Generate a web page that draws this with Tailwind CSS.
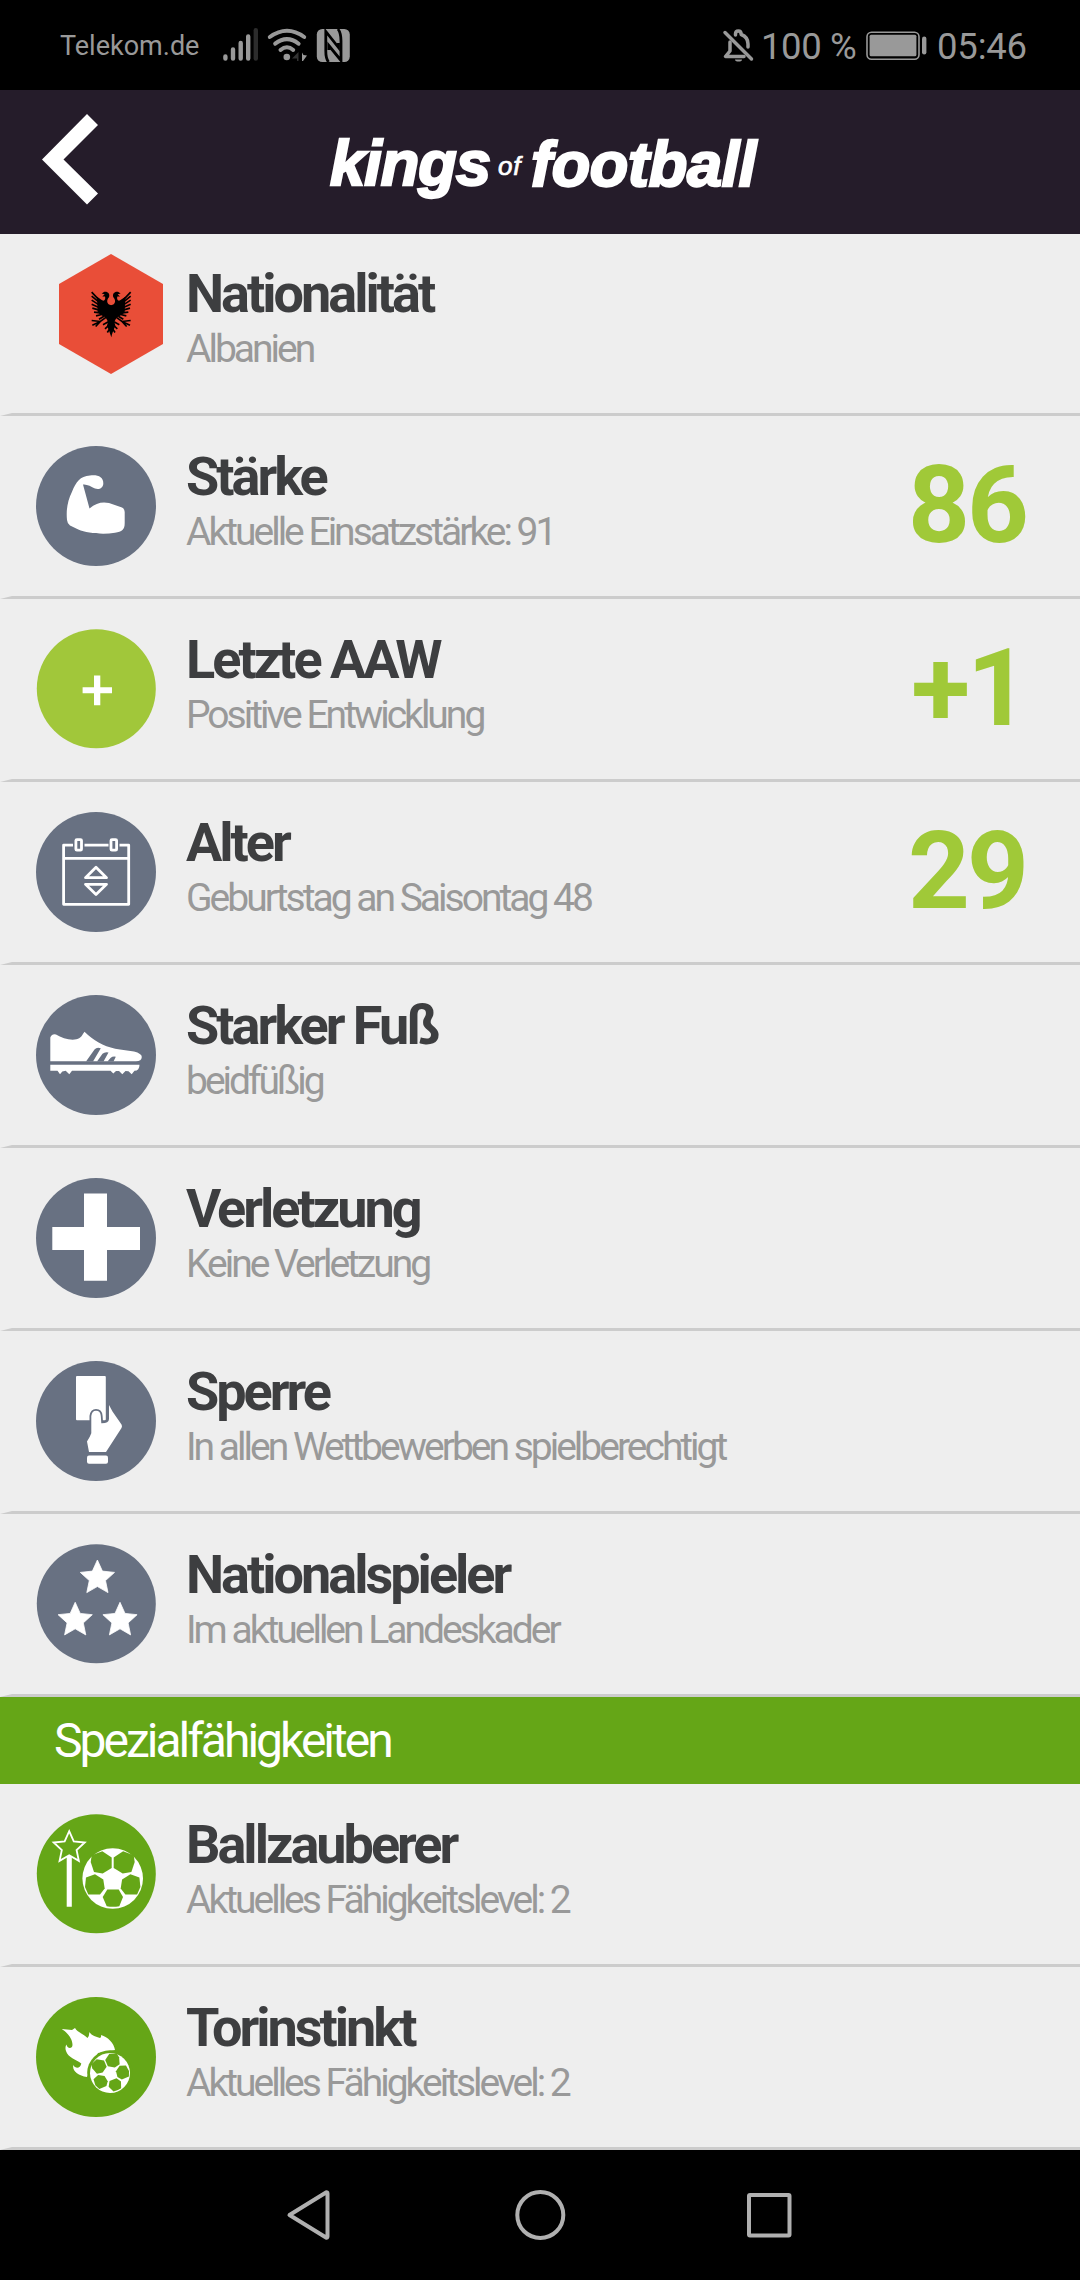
<!DOCTYPE html>
<html lang="de">
<head>
<meta charset="utf-8">
<title>Kings of Football</title>
<script src="https://cdn.jsdelivr.net/npm/@tailwindcss/browser@4"></script>
</head>
<body class="w-[1080px] h-[2280px] overflow-hidden bg-black font-[Roboto,sans-serif]">

<svg class="hidden">
  <defs>
    <path id="star" d="M0-18 5-6.9 17.1-5.6 8.1 2.6 10.6 14.6 0 8.5-10.6 14.6-8.1 2.6-17.1-5.6-5-6.9Z"/>
    <g id="ball">
      <circle r="30.3" fill="#fff"/>
      <g fill="#65a617">
        <path d="M-21-23.3-10.4-27.2-1-21V-10.6L-10-5-18.7-6.6-22-16.6Z"/>
        <path d="M-26.7-1-17.7-4.3-9.4 1-8 10-12.7 16H-24.4L-27.7 8.4Z"/>
        <g transform="scale(-1 1)">
          <path d="M-21-23.3-10.4-27.2-1-21V-10.6L-10-5-18.7-6.6-22-16.6Z"/>
          <path d="M-26.7-1-17.7-4.3-9.4 1-8 10-12.7 16H-24.4L-27.7 8.4Z"/>
        </g>
        <path d="M-5.4 11H6L10.3 18.4 6.6 27.7Q0 29-6 27.7L-10 18.4Z"/>
      </g>
    </g>
    <g id="wing">
      <path d="M79 62 72 60C64 54 66 44 72 38 76 28 68 20 58 22L50 27 59 29 52 36 60 36C62 42 60 48 55 49 48 46 44 42 36 37L38 84 52 94 62 99 69 112 66 124 72 138 79 158Z"/>
      <path d="M42 46 20 23M42 53 20 35M42 61 20 47M42 69 20 59M43 77 22 71M46 85 27 83M50 90 33 94M57 95 42 104M64 98 46 111 20 108M46 111 22 122M46 111 32 126M70 112 54 121M72 122 60 133M74 133 67 144" fill="none" stroke="#000" stroke-width="5"/>
    </g>
  </defs>
</svg>

<!-- status bar -->
<div class="flex h-[90px] bg-black text-[#999]">
  <span class="ml-[60px] w-[160px] text-[27px] leading-[92px] whitespace-nowrap">Telekom.de</span>
  <svg class="mt-[20px] h-[50px] w-[140px]" viewBox="220 20 140 50" fill="#999">
    <g stroke="#999" stroke-width="4.4" stroke-linecap="round" fill="none">
      <path d="M225.4 56.5V58.6M233 49.5V58.6M240.7 43V58.6M248.2 36.4V58.6"/>
      <path d="M255.8 30.2V58.6" stroke="#2c2c2c"/>
      <path stroke-width="4" d="M269.8 37Q287 24.5 304.2 37M275.2 43.7Q287 34.5 298.6 43.7M280.5 50Q287 44.5 293.2 50"/>
    </g>
    <circle cx="286.8" cy="57" r="3.3"/>
    <path d="M292 58.500 298.500 52V61H297V58.500Z" fill="#333"/>
    <path d="M302 52.500 303.500 55 307 55.500 303 61H302Z"/>
    <rect x="316.800" y="29" width="33" height="33" rx="5.500"/>
    <g fill="none" stroke="#000" stroke-width="2.800">
      <path d="M328.500 62C325.500 58 325.800 54 325.800 50V31.500L338.500 47.500V43"/>
      <path d="M338 29C341 33 341 37 341 41V60.500L328.800 45.500V50"/>
    </g>
  </svg>
  <svg class="mt-[20px] ml-[360px] h-[50px] w-[40px]" viewBox="720 20 40 50" fill="none" stroke="#999" stroke-width="3.500" stroke-linecap="round" stroke-linejoin="round">
    <path d="M725 32.500 751.500 59"/>
    <path d="M730 42V51L725.500 56.500H744M735.500 35V34Q735.500 31 738.300 31 741.200 31 741.200 34.500 748 37 748 44V47"/>
    <path d="M735 59.500H742Q742 61.500 738.500 61.500 735 61.500 735 59.500Z" fill="#999" stroke="none"/>
  </svg>
  <span class="ml-px w-[105px] text-[36.5px] leading-[94px] tracking-[-0.4px] whitespace-nowrap">100 %</span>
  <svg class="mt-[20px] h-[50px] w-[64px]" viewBox="866 20 64 50" fill="#999">
    <rect x="867" y="32.200" width="52" height="27" rx="4.500" fill="none" stroke="#999" stroke-width="1.600"/>
    <rect x="869.600" y="34.800" width="46.800" height="21.400" rx="1.500"/>
    <rect x="922" y="36.500" width="4.400" height="18" rx="2.200"/>
  </svg>
  <span class="ml-[7px] text-[36.5px] leading-[94px] tracking-[-0.2px]">05:46</span>
</div>

<!-- header -->
<header class="flex h-[144px] items-start bg-[#251c2a] text-white">
  <svg class="mt-[23px] ml-[41px] h-[92px] w-[58px]" viewBox="41 113 58 92" fill="#fff"><path d="M87 114 98 125 63.500 159.500 98 193.500 87 204.500 42 159.500Z"/></svg>
  <div class="ml-[231px] mt-[33px] flex items-baseline whitespace-nowrap font-['Liberation_Sans',sans-serif] italic leading-[80px]">
    <span class="w-[168px] text-[63px] font-bold tracking-[-0.9px] [-webkit-text-stroke:2.4px_white]">kings</span>
    <span class="relative -top-[10px] w-[33px] text-[26px] tracking-[0.8px] [-webkit-text-stroke:0.7px_white]">of</span>
    <span class="relative top-px text-[63px] font-bold tracking-[-0.3px] [-webkit-text-stroke:2.4px_white]">football</span>
  </div>
</header>

<!-- player data -->
<main class="bg-[#eee]">
  <section class="flex h-[182px] border-b-[3px] border-l-[12px] border-b-[#ccc] border-l-transparent">
    <svg class="mt-[20px] ml-[47px] h-[120px] w-[104px] shrink-0" viewBox="0 0 104 120">
      <path d="M52 0 104 30V90L52 120 0 90V30Z" fill="#e94e38"/>
      <g transform="translate(26 30.500) scale(.3333)"><use href="#wing"/><use href="#wing" transform="translate(157 0) scale(-1 1)"/></g>
    </svg>
    <div class="ml-[23px] pt-[28px]">
      <h2 class="text-[54px] leading-[64px] font-bold tracking-[-3px] text-[#3d3e40]">Nationalität</h2>
      <p class="text-[39px] leading-[46px] tracking-[-3px] text-[#999]">Albanien</p>
    </div>
  </section>

  <section class="flex h-[183px] border-b-[3px] border-l-[12px] border-b-[#ccc] border-l-transparent">
    <svg class="mt-[30px] ml-[24px] size-[120px] shrink-0" viewBox="0 0 120 120">
      <circle cx="60" cy="60" r="60" fill="#687182"/>
      <path d="M36 45.700C40 36 44 30 54 29.500 62 28.500 67.500 31 67.300 37.500 67.300 42 63 44 59 42.500 55 40.500 51 38 47 38.500L53.500 62.500C60 57 66 55.500 73 57L86 61.500Q88.700 63 88.700 66V77C88.700 84 86 85.500 79 86.700 66 89 51 87 42.300 83.500L34 79.500Q31.300 77.500 31 74C30 64 31.500 55 36 45.700Z" fill="#fff"/>
    </svg>
    <div class="ml-[30px] pt-[29px]">
      <h2 class="text-[54px] leading-[64px] font-bold tracking-[-3px] text-[#3d3e40]">Stärke</h2>
      <p class="text-[39px] leading-[46px] tracking-[-3px] text-[#999]">Aktuelle Einsatzstärke: 91</p>
    </div>
    <div class="ml-auto pt-[26px] pr-[54px] text-right text-[108px] leading-[126px] font-bold tracking-[-3px] text-[#a0c938]">86</div>
  </section>

  <section class="flex h-[183px] border-b-[3px] border-l-[12px] border-b-[#ccc] border-l-transparent">
    <svg class="mt-[30px] ml-[24px] size-[120px] shrink-0" viewBox="0 0 120 120">
      <circle cx="60.300" cy="59.800" r="59.500" fill="#a1c73a"/>
      <path d="M58 46.500H64.300V58.200H76V64.200H64.300V76.300H58V64.200H46.600V58.200H58Z" fill="#fff"/>
    </svg>
    <div class="ml-[30px] pt-[29px]">
      <h2 class="text-[54px] leading-[64px] font-bold tracking-[-3px] text-[#3d3e40]">Letzte AAW</h2>
      <p class="text-[39px] leading-[46px] tracking-[-3px] text-[#999]">Positive Entwicklung</p>
    </div>
    <div class="ml-auto pt-[26px] pr-[54px] text-right text-[108px] leading-[126px] font-bold tracking-[-3px] text-[#a0c938]">+1</div>
  </section>

  <section class="flex h-[183px] border-b-[3px] border-l-[12px] border-b-[#ccc] border-l-transparent">
    <svg class="mt-[30px] ml-[24px] size-[120px] shrink-0" viewBox="0 0 120 120">
      <circle cx="60" cy="60" r="60" fill="#687182"/>
      <g fill="none" stroke="#fff" stroke-width="2.800" stroke-linejoin="round">
        <path d="M37 33.200H27.600V92.300H92.700V33.200H83.500M48.500 33.200H72.500M27.600 46.400H92.700"/>
        <rect x="39.900" y="27.600" width="5.600" height="10.600" rx="1"/>
        <rect x="75" y="27.600" width="5.600" height="10.600" rx="1"/>
        <path d="M60 55.200 70.500 65.700H49.500ZM60 82.500 70.500 72.300H49.500Z"/>
      </g>
    </svg>
    <div class="ml-[30px] pt-[29px]">
      <h2 class="text-[54px] leading-[64px] font-bold tracking-[-3px] text-[#3d3e40]">Alter</h2>
      <p class="text-[39px] leading-[46px] tracking-[-3px] text-[#999]">Geburtstag an Saisontag 48</p>
    </div>
    <div class="ml-auto pt-[26px] pr-[54px] text-right text-[108px] leading-[126px] font-bold tracking-[-3px] text-[#a0c938]">29</div>
  </section>

  <section class="flex h-[183px] border-b-[3px] border-l-[12px] border-b-[#ccc] border-l-transparent">
    <svg class="mt-[30px] ml-[24px] size-[120px] shrink-0" viewBox="0 0 120 120">
      <circle cx="60" cy="60" r="60" fill="#687182"/>
      <path d="M14.300 66.300V42.500Q16 38.500 20 39.500C27 44 38 46.500 43.500 43 46.500 41 46.800 38.500 48.500 36.700L52 40C61 48 71 52.500 84 54.500L98 56.500Q105.800 58.500 105.800 62 105.500 66.300 100 66.300ZM14.300 69.700H103.500Q103.500 75.600 98.500 75.800L95.700 79.300 92.500 76.300 89.500 76 86.300 79.300 83 76 80 76 77.300 78.500 74.500 75.700H36L33.300 79.300 29.700 75.700 26.300 76.500 24 79.300 21.500 75.700H14.300Z" fill="#fff"/>
      <path d="M50 66.400 58.500 54.500Q61 51.500 64.800 53.300L57 66.400ZM61 66.400 66.500 58.800Q69 56.500 72.500 57.500L67.500 66.400ZM71.500 66.400 74.500 63Q77 61 79.800 61.800L77.500 66.400Z" fill="#687182"/>
    </svg>
    <div class="ml-[30px] pt-[29px]">
      <h2 class="text-[54px] leading-[64px] font-bold tracking-[-3px] text-[#3d3e40]">Starker Fuß</h2>
      <p class="text-[39px] leading-[46px] tracking-[-3px] text-[#999]">beidfüßig</p>
    </div>
  </section>

  <section class="flex h-[183px] border-b-[3px] border-l-[12px] border-b-[#ccc] border-l-transparent">
    <svg class="mt-[30px] ml-[24px] size-[120px] shrink-0" viewBox="0 0 120 120">
      <circle cx="60" cy="60" r="60" fill="#687182"/>
      <path d="M48 15.500H71V49H104V72H71V102.800H48V72H16.300V49H48Z" fill="#fff"/>
    </svg>
    <div class="ml-[30px] pt-[29px]">
      <h2 class="text-[54px] leading-[64px] font-bold tracking-[-3px] text-[#3d3e40]">Verletzung</h2>
      <p class="text-[39px] leading-[46px] tracking-[-3px] text-[#999]">Keine Verletzung</p>
    </div>
  </section>

  <section class="flex h-[183px] border-b-[3px] border-l-[12px] border-b-[#ccc] border-l-transparent">
    <svg class="mt-[30px] ml-[24px] size-[120px] shrink-0" viewBox="0 0 120 120">
      <circle cx="60" cy="60" r="60" fill="#687182"/>
      <rect x="40" y="15" width="29.800" height="44.300" rx="1" fill="#fff"/>
      <path d="M55.300 72.300V55Q56 49.700 60 49.700 64.500 49.700 64.800 55L65.300 62.300Q72.800 62.500 73 58V44L76.500 50.500 85.500 63.500Q86.500 65 85.500 67L70 91H53L51 80.500Q54 76 55.300 72.300Z" fill="#fff" stroke="#687182" stroke-width="3.600" paint-order="stroke"/>
      <rect x="51" y="94.500" width="21" height="8.300" rx="2" fill="#fff"/>
    </svg>
    <div class="ml-[30px] pt-[29px]">
      <h2 class="text-[54px] leading-[64px] font-bold tracking-[-3px] text-[#3d3e40]">Sperre</h2>
      <p class="text-[39px] leading-[46px] tracking-[-3px] text-[#999]">In allen Wettbewerben spielberechtigt</p>
    </div>
  </section>

  <section class="flex h-[183px] border-b-[3px] border-l-[12px] border-b-[#ccc] border-l-transparent">
    <svg class="mt-[30px] ml-[24px] size-[120px] shrink-0" viewBox="0 0 120 120">
      <circle cx="60.300" cy="59.800" r="59.500" fill="#687182"/>
      <g fill="#fff" stroke="#fff" stroke-width=".8" stroke-linejoin="round">
        <use href="#star" x="61.400" y="34"/><use href="#star" x="39.200" y="76.300"/><use href="#star" x="84" y="76.300"/>
      </g>
    </svg>
    <div class="ml-[30px] pt-[29px]">
      <h2 class="text-[54px] leading-[64px] font-bold tracking-[-3px] text-[#3d3e40]">Nationalspieler</h2>
      <p class="text-[39px] leading-[46px] tracking-[-3px] text-[#999]">Im aktuellen Landeskader</p>
    </div>
  </section>

  <div class="h-[87px] bg-[#65a617] pl-[54px] text-[48px] leading-[87px] tracking-[-3px] text-white">Spezialfähigkeiten</div>

  <section class="flex h-[183px] border-b-[3px] border-l-[12px] border-b-[#ccc] border-l-transparent">
    <svg class="mt-[30px] ml-[24px] size-[120px] shrink-0" viewBox="0 0 120 120">
      <circle cx="60.300" cy="59.800" r="59.500" fill="#65a617"/>
      <use href="#star" transform="translate(33.200 33.600) scale(.91)" fill="none" stroke="#fff" stroke-width="2"/>
      <path d="M30.700 43 33.200 41 35.800 43V92.700H30.700Z" fill="#fff"/>
      <use href="#ball" x="76.700" y="64.500"/>
    </svg>
    <div class="ml-[30px] pt-[29px]">
      <h2 class="text-[54px] leading-[64px] font-bold tracking-[-3px] text-[#3d3e40]">Ballzauberer</h2>
      <p class="text-[39px] leading-[46px] tracking-[-3px] text-[#999]">Aktuelles Fähigkeitslevel: 2</p>
    </div>
  </section>

  <section class="flex h-[183px] border-b-[3px] border-l-[12px] border-b-[#ccc] border-l-transparent">
    <svg class="mt-[30px] ml-[24px] size-[120px] shrink-0" viewBox="0 0 120 120">
      <circle cx="60" cy="60" r="60" fill="#65a617"/>
      <path d="M25.700 32 36 33 39 31C41 35 46 36 51.500 41Q53.500 38.500 53.300 35C56 39 60 39.500 64 41Q65.500 40 65 38C72 40 78 46 79 53L62 56 51 80C42 79 36 74 37.300 68 39 71.500 44 72.500 45.300 66.500 40 62 32 61 30 54 29 51 29.500 49 30.500 47.500 31 52 36.500 52 36.500 48 36.500 42 32 36 25.700 32Z" fill="#fff"/>
      <circle cx="74" cy="76" r="22.800" fill="#65a617"/>
      <use href="#ball" transform="translate(74 76) rotate(-23) scale(.66)"/>
    </svg>
    <div class="ml-[30px] pt-[29px]">
      <h2 class="text-[54px] leading-[64px] font-bold tracking-[-3px] text-[#3d3e40]">Torinstinkt</h2>
      <p class="text-[39px] leading-[46px] tracking-[-3px] text-[#999]">Aktuelles Fähigkeitslevel: 2</p>
    </div>
  </section>
</main>

<!-- navigation bar -->
<nav class="flex h-[130px] items-center justify-center bg-black">
  <svg class="h-[56px] w-[520px]" viewBox="280 2187 520 56" fill="none" stroke="#b0b0b0" stroke-width="4" stroke-linejoin="round">
    <path d="M289.500 2215 326 2192.500Q327.500 2192 327.500 2193.500V2236.500Q327.500 2238 326 2237.500Z"/>
    <circle cx="540.300" cy="2215" r="23"/>
    <rect x="749" y="2195" width="40.500" height="40.500" rx="1"/>
  </svg>
</nav>
</body>
</html>
